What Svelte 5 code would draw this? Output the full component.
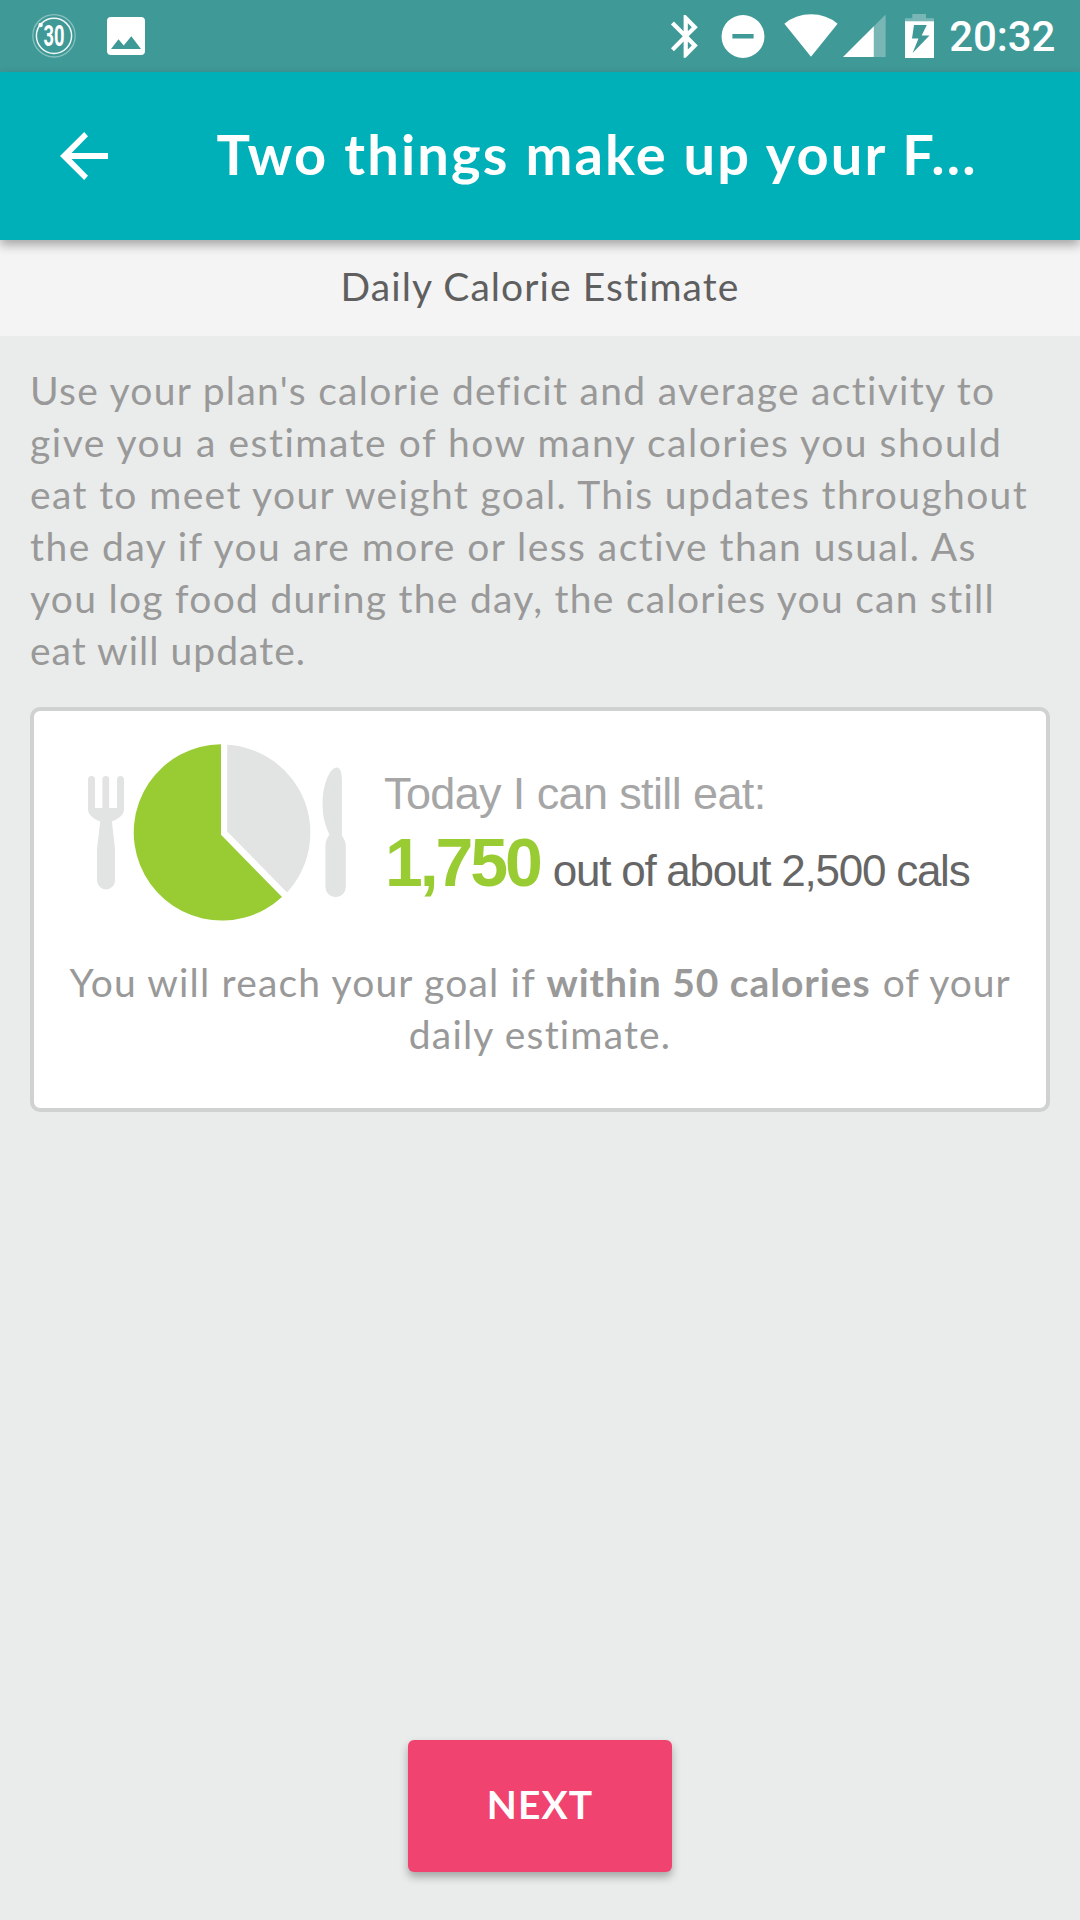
<script>
  // Each paragraph line carries its own tracking, in pixels.
  const intro = [
    { text: "Use your plan's calorie deficit and average activity to", track: 1.3 },
    { text: 'give you a estimate of how many calories you should', track: 1.53 },
    { text: 'eat to meet your weight goal. This updates throughout', track: 1.36 },
    { text: 'the day if you are more or less active than usual. As', track: 1.45 },
    { text: 'you log food during the day, the calories you can still', track: 1.27 },
    { text: 'eat will update.', track: 1.03 }
  ];
</script>

<div class="screen">
  <div class="status">
    <svg class="badge30" width="46" height="72" viewBox="31 0 46 72">
      <circle cx="54" cy="35.8" r="21.2" fill="none" stroke="#fff" stroke-opacity=".38" stroke-width="1.3" />
      <circle cx="54" cy="35.8" r="17.6" fill="none" stroke="#fff" stroke-opacity=".92" stroke-width="1.5" />
      <circle cx="40.6" cy="25" r="2.2" fill="#fff" />
      <text x="54" y="46.1" text-anchor="middle" textLength="21" lengthAdjust="spacingAndGlyphs">30</text>
    </svg>
    <svg class="photo" width="38" height="72" viewBox="107 0 38 72">
      <path fill="#fff" fill-rule="evenodd" d="M111 17h30a4 4 0 0 1 4 4v30a4 4 0 0 1-4 4h-30a4 4 0 0 1-4-4V21a4 4 0 0 1 4-4zM111 49h30L131.300 36.200 123.700 45.600 118.500 39.300z" />
    </svg>
    <span class="fill"></span>
    <svg width="28" height="72" viewBox="670 0 28 72">
      <path fill="#fff" transform="translate(660.4 10.800) scale(2.110 2.130)" d="M17.710 7.710L12 2h-1v7.590L6.410 5 5 6.410 10.590 12 5 17.590 6.410 19 11 14.410V22h1l5.710-5.710-4.300-4.290 4.300-4.290zM13 5.830l1.880 1.880L13 9.590V5.830zm1.880 10.460L13 18.170v-3.760l1.880 1.880z" />
    </svg>
    <svg class="dnd" width="44" height="72" viewBox="721.600 0 44 72">
      <path fill="#fff" fill-rule="evenodd" d="M743.600 15a21.400 21.400 0 1 1 0 42.900a21.400 21.400 0 1 1 0-42.900zM733 34v4.600h21.200V34z" />
    </svg>
    <svg class="wifi" width="54" height="72" viewBox="784.600 0 54 72">
      <path fill="#fff" d="M811.600 56.800L785 23.800Q796 14.300 811.600 14.300T838.200 23.800z" />
    </svg>
    <svg class="signal" width="43" height="72" viewBox="843.400 0 43 72">
      <path fill="#fff" fill-opacity=".3" d="M886 14.500V57H874V26.500z" />
      <path fill="#fff" d="M843.400 57L874.200 26.200V57z" />
    </svg>
    <svg class="battery" width="29" height="72" viewBox="905 0 29 72">
      <path fill="#fff" fill-opacity=".3" d="M912.300 14H926v4.300h8V21.500H905V18.300h7.300z" />
      <path fill="#fff" fill-rule="evenodd" d="M905 21.300h29V58H905zM914 25L912 38.500h6.500L912.600 53 929.500 35.500h-7.800L926.800 25z" />
    </svg>
    <span class="clock">20:32</span>
  </div>

  <header class="appbar">
    <svg class="back" width="48" height="48" viewBox="0 0 48 48">
      <path fill="#fff" d="M48 21H11.500L28 4.200 24.200 0 0 24 24.200 48 28 43.800 11.500 27H48z" />
    </svg>
    <h1>Two things make up your F...</h1>
  </header>

  <div class="subhead">Daily Calorie Estimate</div>

  <main>
    <p class="intro">
      {#each intro as line}
        <span class="line" style:letter-spacing="{line.track}px">{line.text}</span>
      {/each}
    </p>

    <section class="card">
      <div class="summary">
        <svg class="plate" width="266" height="182" viewBox="84 742 266 182">
          <g fill="#e2e4e3">
            <path d="M88 779.400a3.500 3.500 0 0 1 7 0V808h7.400V779.400a3.400 3.400 0 0 1 6.800 0V808h7.800V779.400a3.500 3.500 0 0 1 7 0V809C124 815 118.500 819 111.900 821.500L115 849V880.500a9 9 0 0 1-18 0V849L100.200 821.500C93.500 819 88 815 88 809z" />
            <path d="M336.500 767.600C340.500 767.600 341.900 773 341.900 780V835.500C344 839 345.800 841.500 345.800 846V887a10.200 10.200 0 0 1-20.400 0V846C325.400 841 327 838.500 329.400 834.500C325 825 322.600 817 322.600 804C322.600 784 330 768 336.500 767.600z" />
            <path d="M227.200 744.800A88 88 0 0 1 287 892.400L227.200 831.400z" />
          </g>
          <path fill="#9c3" d="M221 744.200V834.700L282 897A88.200 88.200 0 1 1 221 744.200z" />
        </svg>
        <div class="figures">
          <div class="label">Today I can still eat:</div>
          <div class="amount"><strong>1,750</strong><span>out of about 2,500 cals</span></div>
        </div>
      </div>
      <p class="goal">
        <span class="line">You will reach your goal if <b>within 50 calories</b> <i>of your</i></span>
        <span class="line">daily estimate.</span>
      </p>
    </section>
  </main>

  <button class="next">NEXT</button>
</div>

<style>
  :global(body) { margin: 0; }
  .screen {
    width: 1080px;
    height: 1920px;
    display: flex;
    flex-direction: column;
    overflow: hidden;
    background: #eaeceb;
    font-family: Lato, 'Open Sans', sans-serif;
    font-size: 39px;
  }
  svg { display: block; flex: none; }

  .status {
    height: 72px;
    flex: none;
    display: flex;
    background: #3f9997;
    padding: 0 25.2px 0 31px;
  }
  .badge30 text {
    fill: #fff;
    font: 700 29px Roboto, sans-serif;
  }
  .photo { margin-left: 30px; }
  .fill { flex: 1; }
  .dnd { margin-left: 23.6px; }
  .wifi { margin-left: 19px; }
  .signal { margin-left: 4.8px; }
  .battery { margin-left: 18.6px; }
  .clock {
    width: 105.6px;
    margin-left: 15.6px;
    font: 500 42px/74px Roboto, sans-serif;
    letter-spacing: -0.1px;
    color: #fff;
    white-space: nowrap;
  }

  .appbar {
    position: relative;
    height: 168px;
    flex: none;
    display: flex;
    align-items: center;
    box-sizing: border-box;
    padding-left: 60px;
    background: #00b0b9;
    box-shadow: 0 5px 10px rgba(0, 0, 0, 0.32);
  }
  h1 {
    margin: 0 0 5px 108.5px;
    font-size: 56px;
    line-height: 68px;
    font-weight: 700;
    letter-spacing: 2.17px;
    color: #fff;
    white-space: nowrap;
  }

  .subhead {
    height: 96px;
    flex: none;
    line-height: 92px;
    text-align: center;
    letter-spacing: 1.07px;
    color: #5f5f5f;
    background: #f4f4f4;
  }

  main { flex: 1; padding: 27.5px 30px 0; }
  p { margin: 0; }
  .line { display: block; white-space: nowrap; line-height: 52px; }
  .intro { height: 343.5px; color: #999; }

  .card {
    box-sizing: border-box;
    height: 405px;
    padding: 31px 0 0;
    border: 4px solid #d0d1d1;
    border-radius: 10px;
    background: #fff;
  }
  .summary { display: flex; padding-left: 50px; }
  .figures {
    padding: 25.5px 0 0 34px;
    font-family: 'Liberation Sans', Arial, sans-serif;
    white-space: nowrap;
  }
  .label {
    font-size: 45px;
    line-height: 52px;
    letter-spacing: -0.62px;
    color: #a6a6a6;
  }
  .amount {
    display: flex;
    align-items: baseline;
    margin-top: 8px;
    color: #666;
    font-size: 44px;
    letter-spacing: -1.24px;
  }
  .amount strong {
    font-size: 68px;
    line-height: 68px;
    letter-spacing: -3.09px;
    color: #9c3;
    margin: 0 13px 0 1px;
  }
  .amount span { line-height: 44px; }

  .goal {
    margin-top: 31.5px;
    text-align: center;
    color: #999;
    letter-spacing: 1.18px;
  }
  .goal b { font-weight: 700; letter-spacing: 0.95px; }
  .goal i { font-style: normal; letter-spacing: 0.95px; margin-left: 1px; }

  .next {
    align-self: center;
    flex: none;
    width: 264px;
    height: 132px;
    margin-bottom: 48px;
    padding: 0 0 4px;
    border: 0;
    border-radius: 6px;
    background: #f04370;
    box-shadow: 0 5px 8px rgba(0, 0, 0, 0.3);
    color: #fff;
    font: 700 39px/52px Lato, sans-serif;
    letter-spacing: 1.1px;
  }
</style>
